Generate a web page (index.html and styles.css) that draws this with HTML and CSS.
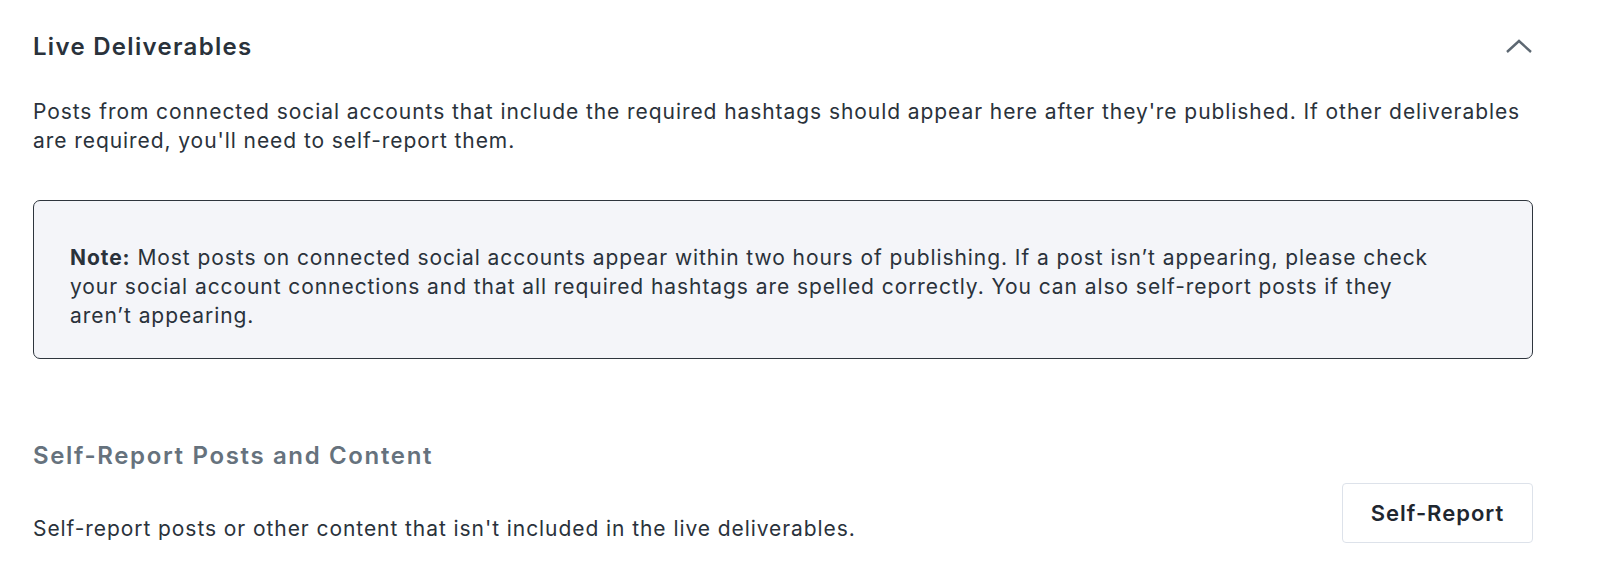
FILE: index.html
```html
<!DOCTYPE html>
<html>
<head>
<meta charset="utf-8">
<link rel="stylesheet" href="styles.css">
</head>
<body>
<div class="page">
  <div class="section-head">
    <h2 class="title">Live Deliverables</h2>
    <svg class="chevron" width="28" height="16" viewBox="0 0 28 16"><path d="M2 14 L14 3 L26 14" fill="none" stroke="#5d6872" stroke-width="2.4"/></svg>
  </div>
  <p class="intro">Posts from connected social accounts that include the required hashtags should appear here after they're published. If other deliverables are required, you'll need to self-report them.</p>
  <div class="note">
    <p><strong>Note:</strong> Most posts on connected social accounts appear within two hours of publishing. If a post isn’t appearing, please check your social account connections and that all required hashtags are spelled correctly. You can also self-report posts if they aren’t appearing.</p>
  </div>
  <h2 class="subtitle">Self-Report Posts and Content</h2>
  <div class="report-row">
    <p class="desc">Self-report posts or other content that isn't included in the live deliverables.</p>
    <button class="btn">Self-Report</button>
  </div>
</div>
</body>
</html>
```

FILE: styles.css
```css
html, body {
  margin: 0;
  padding: 0;
  background: #ffffff;
}
body {
  font-family: Inter, "Noto Sans", sans-serif;
  color: #2a323b;
  letter-spacing: 0.93px;
}
.page {
  padding: 30px 67px 0 33px;
}
.section-head {
  display: flex;
  justify-content: space-between;
  align-items: center;
  height: 32px;
}
.title {
  margin: 0;
  font-size: 24px;
  font-weight: 600;
  letter-spacing: 1.3px;
  color: #2a323b;
}
.chevron {
  display: block;
}
.intro {
  margin: 35px 0 0;
  font-size: 21px;
  line-height: 29px;
  color: #2a323b;
}
.note {
  margin-top: 45px;
  background: #f4f5f9;
  border: 1.5px solid #2e353d;
  border-radius: 7px;
  padding: 42px 36px 28px;
}
.note p {
  margin: 0;
  max-width: 1368px;
  font-size: 21px;
  line-height: 29px;
}
.note strong {
  font-weight: 700;
}
.subtitle {
  margin: 82px 0 0;
  font-size: 24px;
  font-weight: 600;
  letter-spacing: 1.65px;
  color: #66727d;
}
.report-row {
  display: flex;
  justify-content: space-between;
  align-items: flex-end;
  margin-top: 13px;
}
.desc {
  margin: 0;
  font-size: 21px;
  line-height: 29px;
}
.btn {
  font-family: Inter, "Noto Sans", sans-serif;
  font-size: 22px;
  font-weight: 600;
  letter-spacing: 1px;
  color: #1f2730;
  background: #fff;
  border: 1.5px solid #dde2ea;
  border-radius: 4px;
  width: 191px;
  height: 60px;
}
```
